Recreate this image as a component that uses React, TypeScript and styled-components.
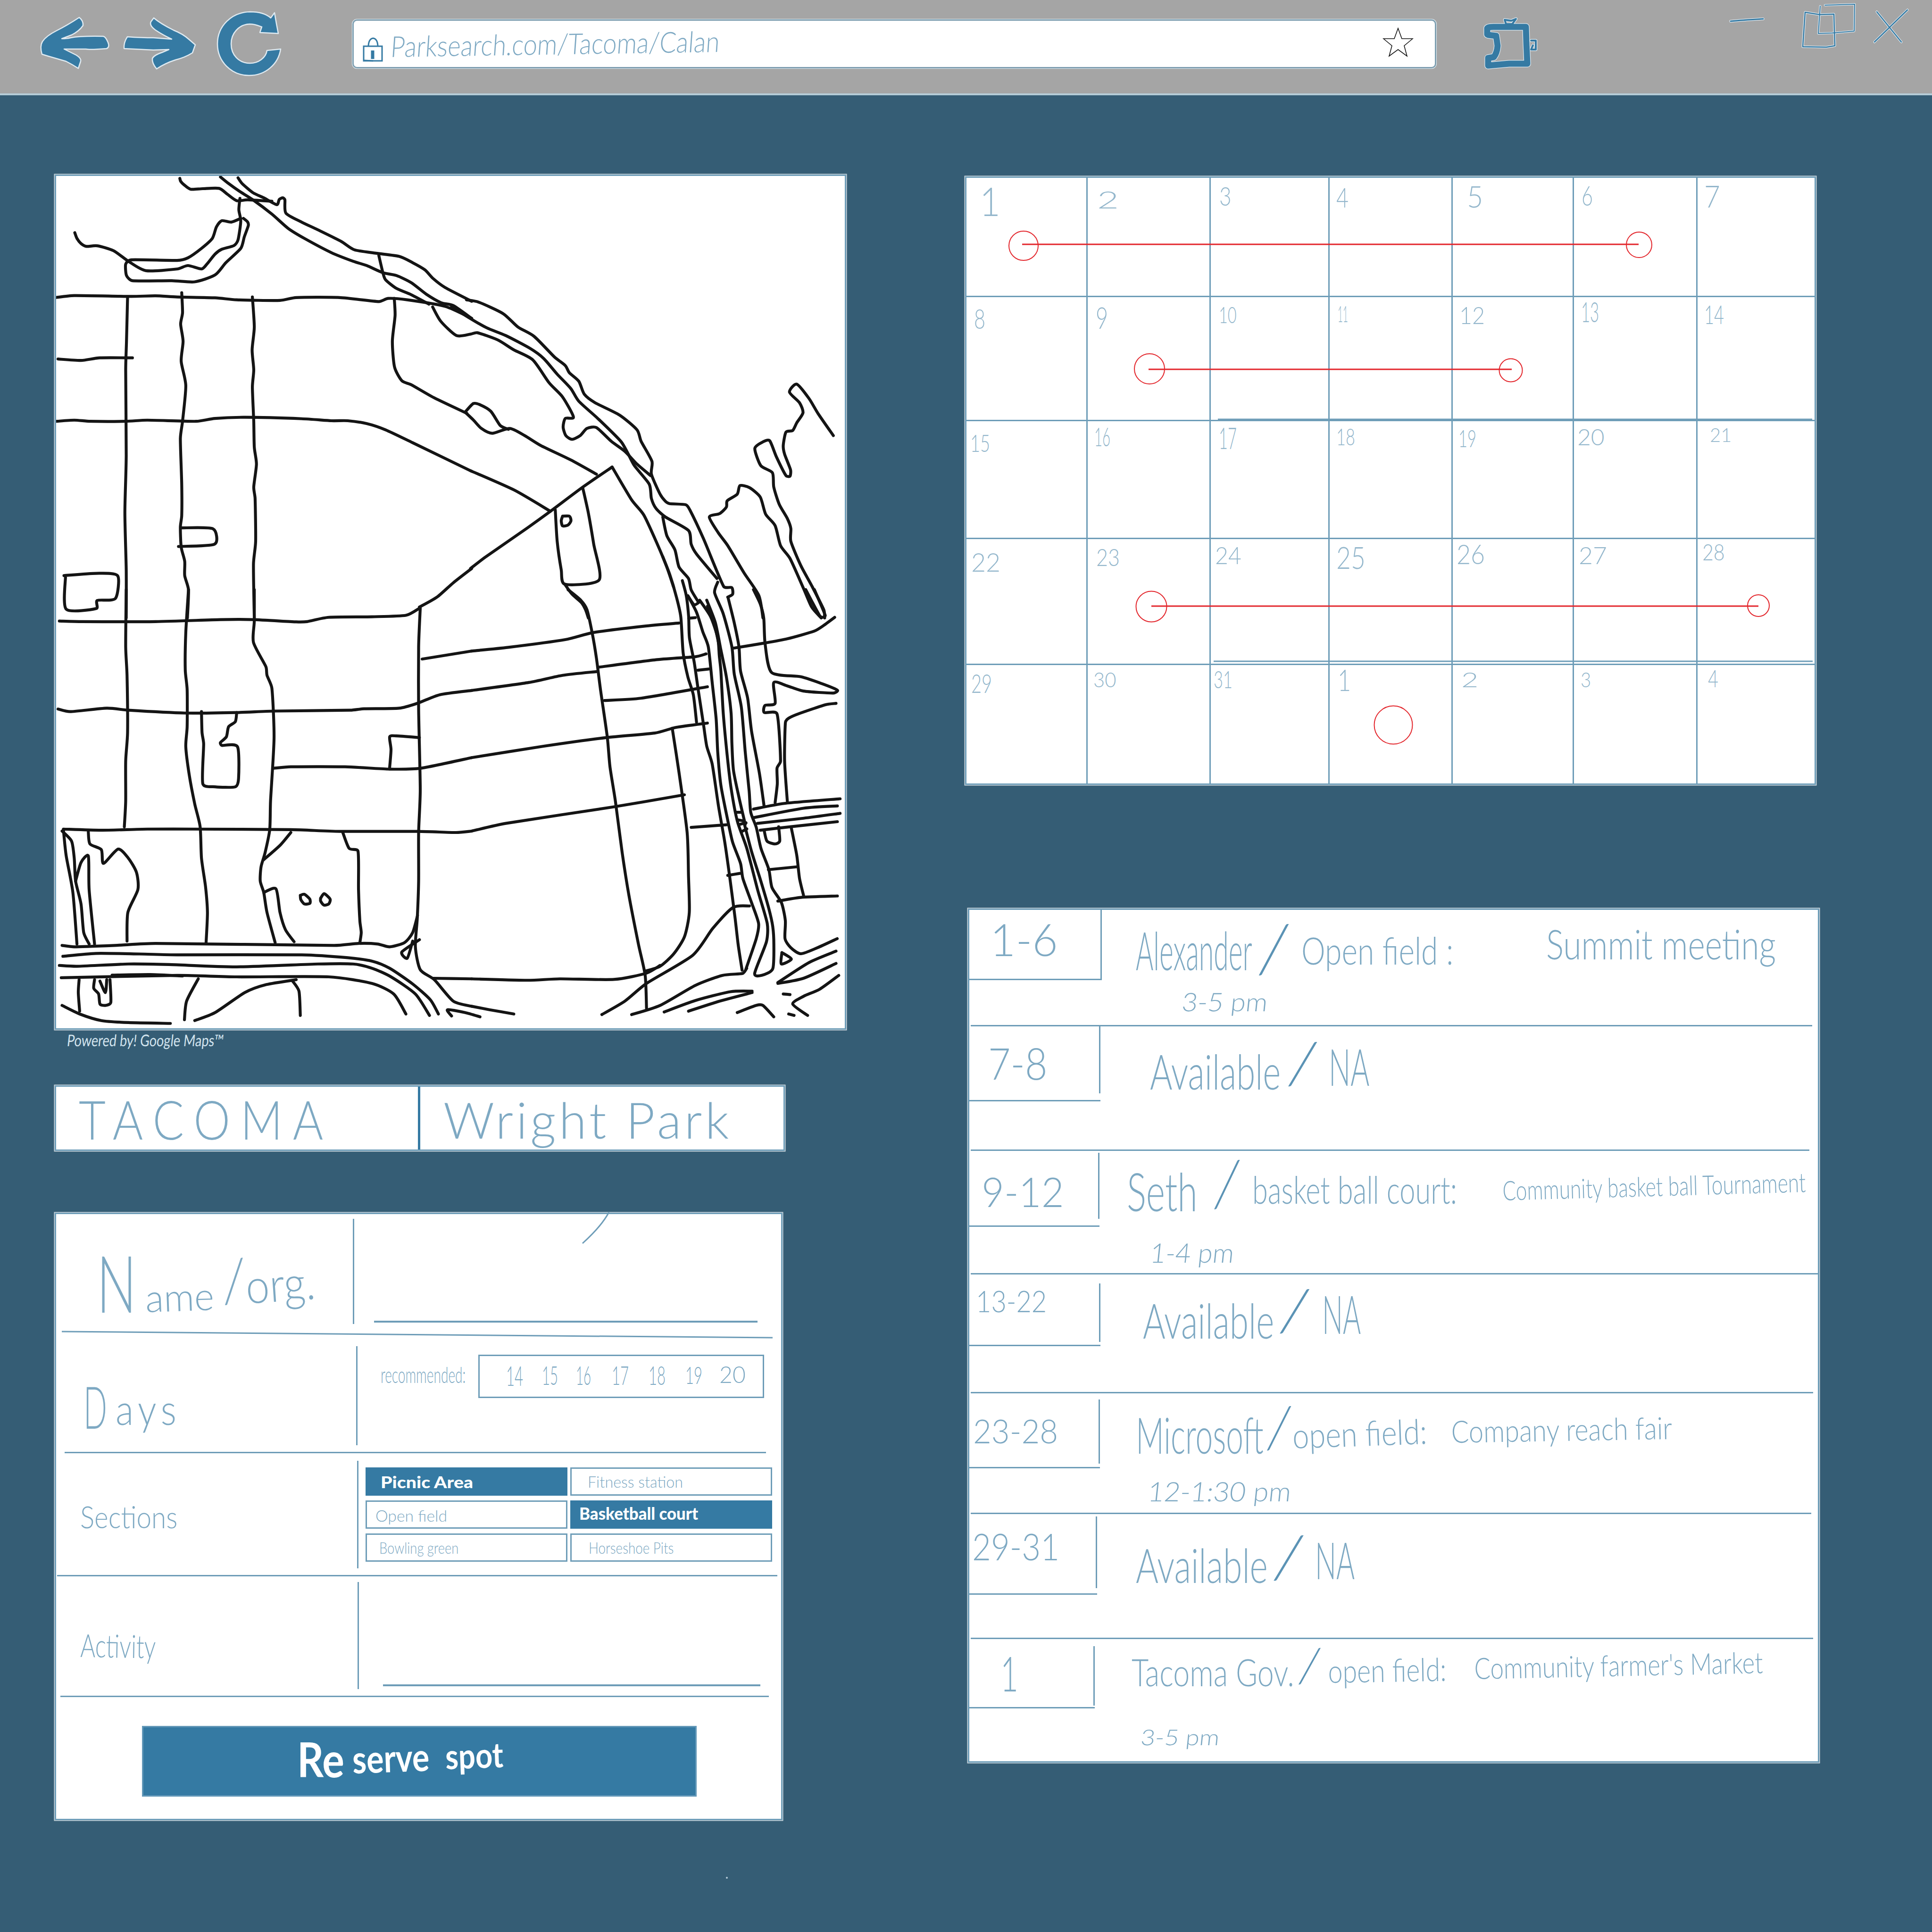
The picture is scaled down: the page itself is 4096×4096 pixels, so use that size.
import React, { ReactNode, useLayoutEffect, useRef, useState } from "react";
import styled, { createGlobalStyle } from "styled-components";

const BG = "#355d75";
const BLUE = "#357aa3";
const LINE = "#6e9db8";
const INK = "#7ea9c3";

const Global = createGlobalStyle`
  * { box-sizing: border-box; }
  html, body { margin: 0; background: ${BG}; }
  body { font-family: Lato, "Open Sans", sans-serif; color: ${INK}; }
`;

/* ---------- pen lettering ---------- */

const InkBox = styled.div<{ $w: number; $h: number; $x: number; $y: number; $tilt: number; $color: string; $weight: number; $spacing: number; $slant: number }>`
  flex: none;
  width: ${(p) => p.$w}px;
  height: ${(p) => p.$h}px;
  line-height: ${(p) => p.$h}px;
  margin: ${(p) => p.$y}px 0 0 ${(p) => p.$x}px;
  font-size: ${(p) => p.$h * 1.36}px;
  font-weight: ${(p) => p.$weight};
  letter-spacing: ${(p) => p.$spacing}em;
  color: ${(p) => p.$color};
  transform: rotate(${(p) => p.$tilt}deg) skewX(${(p) => -p.$slant}deg);
  transform-origin: 0 100%;
`;
const InkSpan = styled.span`
  display: inline-block;
  white-space: nowrap;
  transform-origin: 0 50%;
`;

type InkProps = {
  children: ReactNode;
  w: number;
  h: number;
  x?: number;
  y?: number;
  tilt?: number;
  slant?: number;
  color?: string;
  weight?: number;
  spacing?: number;
};

function Ink({ children, w, h, x = 0, y = 0, tilt = 0, slant = 0, color = INK, weight = 300, spacing = 0 }: InkProps) {
  const ref = useRef<HTMLSpanElement>(null);
  const [k, setK] = useState(1);
  useLayoutEffect(() => {
    if (ref.current && ref.current.offsetWidth) setK(w / ref.current.offsetWidth);
  }, [w, h, children]);
  return (
    <InkBox $w={w} $h={h} $x={x} $y={y} $tilt={tilt} $color={color} $weight={weight} $spacing={spacing} $slant={slant}>
      <InkSpan ref={ref} style={{ transform: `scaleX(${k})` }}>{children}</InkSpan>
    </InkBox>
  );
}

/* ---------- page frame ---------- */

const Page = styled.div`
  width: 4096px;
  height: 4096px;
  background: ${BG};
  overflow: hidden;
`;
const Toolbar = styled.header`
  height: 202px;
  display: flex;
  align-items: flex-start;
  background: #a5a5a5;
  border-bottom: 4px solid #b5ccd8;
`;
const NavIcons = styled.svg`
  display: block;
  flex: none;
  width: 747px;
  height: 198px;
`;
const Address = styled.div`
  flex: none;
  width: 2298px;
  height: 104px;
  margin-top: 41px;
  display: flex;
  background: #fff;
  border: 3px solid #7f9fb1;
  border-radius: 10px;
  box-shadow: 0 0 0 1px #e6eff4;
`;
const LockIcon = styled.svg`
  display: block;
  flex: none;
  width: 44px;
  height: 58px;
  margin: 34px 0 0 19px;
`;
const StarIcon = styled.svg`
  display: block;
  flex: none;
  width: 66px;
  height: 64px;
  margin: 14px 45px 0 auto;
`;
const WindowIcons = styled.svg`
  display: block;
  flex: none;
  width: 1051px;
  height: 198px;
`;
const Main = styled.main`
  display: flex;
  padding: 168px 0 0 116px;
`;
const Left = styled.section`
  width: 1930px;
  flex: none;
`;
const Right = styled.section`
  padding-top: 4px;
`;
const Panel = styled.div`
  background: #fff;
  border: 3px solid ${LINE};
  box-shadow: 0 0 0 1.5px rgba(255, 255, 255, 0.75);
`;
const MapPanel = styled(Panel)`
  width: 1678px;
  height: 1813px;
`;
const MapDrawing = styled.svg`
  display: block;
  width: 1671px;
  height: 1807px;
`;
const Credit = styled.div`
  height: 118px;
  display: flex;
  padding: 9px 0 0 25px;
`;
const PlaceBar = styled(Panel)`
  width: 1548px;
  height: 139px;
  display: flex;
`;
const PlaceCell = styled.div<{ $w: number; $divider?: boolean }>`
  width: ${(p) => p.$w}px;
  display: flex;
  border-right: ${(p) => (p.$divider ? `5px solid ${BLUE}` : "0")};
`;

/* ---------- reservation form ---------- */

const Form = styled(Panel)`
  width: 1543px;
  height: 1288px;
  margin-top: 131px;
`;
const FormRow = styled.div<{ $h: number }>`
  height: ${(p) => p.$h}px;
  display: flex;
`;
const Label = styled.div<{ $w: number }>`
  flex: none;
  width: ${(p) => p.$w}px;
  display: flex;
`;
const Field = styled.div<{ $top: number; $bottom: number }>`
  flex: 1;
  margin: ${(p) => p.$top}px 0 ${(p) => p.$bottom}px;
  border-left: 3px solid ${LINE};
  display: flex;
`;
const Rule = styled.div<{ $l: number; $r: number; $tilt?: number }>`
  height: 3px;
  margin: 0 ${(p) => p.$r}px 0 ${(p) => p.$l}px;
  background: ${LINE};
  transform: rotate(${(p) => p.$tilt ?? 0}deg);
`;
const WriteLine = styled.div<{ $l: number; $w: number; $b: number }>`
  align-self: flex-end;
  width: ${(p) => p.$w}px;
  height: 4px;
  margin: 0 0 ${(p) => p.$b}px ${(p) => p.$l}px;
  background: ${LINE};
`;
const StrayMarks = styled.svg`
  position: absolute;
  left: 1230px;
  top: 2566px;
  width: 330px;
  height: 1430px;
  pointer-events: none;
`;
const DayBox = styled.div`
  width: 606px;
  height: 92px;
  margin: 18px 0 0 27px;
  display: flex;
  border: 3px solid ${LINE};
`;
const Options = styled.div`
  display: grid;
  grid-template-columns: 428px 428px;
  grid-template-rows: 60px 60px 60px;
  gap: 10px 6px;
  margin: 14px 0 0 15px;
`;
const Option = styled.div<{ $on?: boolean }>`
  display: flex;
  border: 3px solid ${(p) => (p.$on ? BLUE : LINE)};
  background: ${(p) => (p.$on ? BLUE : "#fff")};
`;
const Reserve = styled.button`
  display: flex;
  width: 1176px;
  height: 150px;
  margin: 61px 0 0 182px;
  padding: 0;
  font-family: inherit;
  text-align: left;
  background: ${BLUE};
  border: 3px solid #6398b8;
`;

/* ---------- calendar ---------- */

const Calendar = styled(Panel)`
  position: relative;
  width: 1804px;
  height: 1290px;
  display: grid;
  grid-template-columns: 257px 261px 252px 261px 257px 262px 1fr;
  grid-template-rows: 253px 263px 250px 267px 1fr;
`;
const Day = styled.div<{ $right: boolean; $bottom: boolean }>`
  display: flex;
  align-items: flex-start;
  border-right: ${(p) => (p.$right ? `3px solid ${LINE}` : "0")};
  border-bottom: ${(p) => (p.$bottom ? `3px solid ${LINE}` : "0")};
`;
const Spans = styled.svg`
  position: absolute;
  left: -3px;
  top: -3px;
  width: 1804px;
  height: 1290px;
`;

/* ---------- schedule ---------- */

const Schedule = styled(Panel)`
  width: 1805px;
  height: 1811px;
  margin: 262px 0 0 6px;
`;
const Slot = styled.div<{ $h: number }>`
  height: ${(p) => p.$h}px;
  display: flex;
  flex-direction: column;
`;
const SlotBody = styled.div`
  flex: 1;
  min-height: 0;
  display: flex;
  align-items: flex-start;
`;
const DateCell = styled.div<{ $w: number; $h: number }>`
  flex: none;
  width: ${(p) => p.$w}px;
  height: ${(p) => p.$h}px;
  border-bottom: 3px solid ${LINE};
`;
const DateBody = styled.div<{ $top: number; $len: number }>`
  margin-top: ${(p) => p.$top}px;
  height: ${(p) => p.$len}px;
  border-right: 3px solid ${LINE};
  display: flex;
`;
const Details = styled.div`
  flex: 1;
`;
const Entry = styled.div`
  height: 172px;
  display: flex;
  align-items: flex-start;
`;

/* ---------- map strokes, one list per sheet ---------- */

type Sheet = { at: string; scale: string; roads: string[] };
const SHEETS: Sheet[] = [
  {
    at: "100 360",
    scale: "0.574 0.6059",
    roads: [
      "490,30 493,40 505,52 530,68 575,66 635,65 665,85 700,108 740,105 830,110",
      "640,25 670,48 710,75 760,105 830,155 890,205 950,240 1050,290 1130,320 1180,335 1240,360 1290,370 1345,395 1400,435 1455,465 1500,475 1568,520",
      "705,28 720,48 760,80 800,98 848,122 857,104 870,98 878,105 882,152 940,183 1000,210 1085,250 1135,280 1215,292 1300,303 1350,325 1395,350 1425,380 1470,412 1568,460",
      "1225,300 1240,360 1250,385 1290,415 1340,435 1410,470",
      "30,447 100,440 310,443 400,441 480,445 620,448 700,455 860,457 920,447 1080,447 1225,461 1260,450 1330,455 1470,478 1568,520",
      "102,220 110,240 125,258 145,268 185,266 245,283 300,320 365,353 480,347 520,335 570,347 590,330 620,295 645,278 690,265 705,245 715,180 708,140 712,100",
      "715,170 680,183 645,178 625,200 610,240 570,275 520,308 480,317 310,315 290,330 293,370 315,388 460,388 545,392 620,368 660,325 715,275 728,235 743,195 740,182 725,170",
      "297,445 293,600 290,700 292,1000 287,1200 292,1400 292,1568",
      "497,430 500,500 493,540 502,600 495,670 512,755 500,880 492,940 497,1100 497,1210 492,1250 495,1320 508,1370 508,1420 522,1470 518,1568",
      "758,445 765,550 757,630 763,700 758,760 763,880 765,970 773,1030 763,1110 768,1150 770,1300 762,1380 765,1568",
      "40,662 125,667 195,658 315,658",
      "35,880 100,876 160,880 290,880 370,876 550,880 620,870 730,866 940,871 1050,878 1110,878 1180,888 1250,910 1350,955 1568,1055",
      "495,1253 612,1256 618,1310 485,1318",
      "62,1420 180,1412 260,1420 252,1500 185,1507 182,1535 70,1537 68,1420",
      "1282,450 1285,510 1275,600 1283,690 1310,738 1345,752 1430,798 1550,852",
      "1375,1530 1440,1495 1500,1445 1568,1395",
    ],
  },
  {
    at: "900 360",
    scale: "0.574 0.6059",
    roads: [
      "155,455 200,463 290,503 345,550 405,583 480,655 520,685 535,710 570,740 590,785 630,815 720,858 785,910 800,950 840,1020 838,1065 870,1135 890,1160 905,1168 965,1172 980,1190 1030,1290 1105,1458 1135,1462 1138,1485 1120,1495",
      "100,478 160,515 230,553 300,580 390,625 440,660 490,715 540,765 570,810 640,870 725,950 750,990 775,1035 830,1100 838,1150 855,1185 890,1215 975,1262 985,1310 1005,1345 1080,1430",
      "150,848 180,875 210,905 250,922 315,905 370,930 430,965 540,1015 635,1065",
      "150,848 180,818 205,822 245,845 280,895 310,908",
      "30,480 60,530 118,580 170,575 195,570 270,595 330,630 400,665 460,745 510,795 550,865 520,870 512,900 522,930 545,943 575,930 600,905 635,902 690,950 740,985 785,1030 835,1070",
      "170,1053 330,1120 465,1195",
      "170,1395 225,1355 380,1253 465,1195 585,1110 693,1040",
      "693,1040 765,1155 810,1208 860,1310 895,1390 920,1460",
      "483,1190 490,1300 505,1400 518,1450 645,1435 625,1310 605,1200 585,1115",
      "510,1212 535,1212 541,1228 530,1243 510,1246 505,1228 510,1212",
      "518,1450 545,1485 580,1515 595,1540 605,1568",
      "880,1215 895,1280 925,1330 940,1390 975,1430 985,1470 1010,1510",
      "1510,930 1455,855 1420,800 1375,750 1348,778 1385,815 1398,850 1375,885 1360,912 1335,918 1325,965 1330,995 1352,1050 1350,1072 1335,1070 1300,1005 1275,948 1250,952 1220,975 1242,1035 1285,1060 1290,1110 1310,1170 1340,1220 1353,1255 1353,1300 1390,1385 1430,1455 1475,1540 1478,1568",
      "1250,1568 1235,1490 1180,1410 1120,1315 1085,1270 1052,1215 1090,1203 1115,1180 1118,1158 1155,1135 1165,1105 1200,1112 1240,1145 1260,1205 1295,1245 1315,1315 1350,1360 1400,1465 1430,1530 1465,1568",
    ],
  },
  {
    at: "100 1250",
    scale: "0.574 0.6059",
    roads: [
      "45,110 130,112 400,112 640,105 760,105 920,113 960,112 1040,97 1200,95 1325,90 1375,65",
      "292,0 290,200 295,300 297,500 290,600 290,740 285,830",
      "522,0 512,150 510,280 517,350 517,480 512,550 525,650 545,750 565,830 570,940 585,1040 592,1130 587,1235",
      "765,0 765,110 762,185 808,270 812,300 830,345 838,520 825,740 822,840 805,920 790,970 787,1020 800,1060 812,1130 842,1235",
      "1568,353 1450,368 1370,397 1300,415 1170,417 1120,422 840,425 700,430 510,432 300,422 220,415 85,427 40,418",
      "838,625 900,620 1100,620 1260,628 1380,625 1568,588",
      "1568,845 1510,850 1370,846 1080,846 900,840 540,838 370,838 200,842 60,838",
      "1385,243 1568,215",
      "1378,65 1372,200 1372,420 1378,700 1372,850 1372,1020 1367,1150 1360,1250 1378,1330 1430,1365 1500,1440 1568,1458",
      "570,427 572,500 578,540 575,680 620,690 695,690 707,660 703,550 645,545 640,535 662,515 670,480 695,462 700,430",
      "1265,622 1270,560 1265,515 1290,512 1375,518",
      "60,840 70,930 95,1060 110,1240",
      "55,845 90,880 100,940 105,1020 125,1100 135,1200 155,1240",
      "105,1020 125,955 152,932 155,1050 175,1240",
      "152,848 158,890 200,910 208,958 262,908 300,940 330,990 335,1050 298,1130 295,1230",
      "900,850 860,895 800,945",
      "800,1060 845,1047 860,1130 880,1190 912,1232",
      "935,1070 950,1066 970,1083 970,1098 950,1100 937,1085 935,1070",
      "1010,1080 1023,1064 1045,1083 1040,1100 1022,1104 1010,1090 1010,1080",
      "1092,850 1115,905 1148,915 1150,1050 1155,1160 1160,1200 1155,1235",
      "55,1245 100,1250 250,1245 400,1238 1060,1245 1150,1238 1220,1240 1265,1250 1320,1235 1350,1200 1368,1140",
      "58,1283 180,1273 340,1275 480,1278 940,1278 1110,1288 1200,1300 1265,1325 1350,1380 1415,1435 1445,1485",
      "45,1315 110,1318 300,1310 450,1312 700,1320 1000,1310 1130,1310 1200,1325 1270,1355 1360,1415 1412,1490",
      "52,1358 480,1350 700,1355 1040,1355 1200,1378 1280,1415 1325,1485",
      "240,1349 380,1347 500,1352",
      "118,1365 115,1410 120,1475",
      "175,1365 172,1395 190,1415 195,1450 215,1455 235,1445 232,1365",
      "195,1370 215,1410 220,1365",
      "55,1455 120,1485 200,1508 300,1515 455,1518",
      "558,1362 515,1440 507,1505",
      "545,1508 620,1480 730,1410 810,1382 920,1365",
      "905,1368 930,1405 935,1490",
      "1375,1225 1310,1268 1330,1290 1350,1230",
      "1425,1360 1568,1362",
    ],
  },
  {
    at: "900 1250",
    scale: "0.574 0.6059",
    roads: [
      "530,0 575,35 600,70 620,155 635,240 650,350 675,515 685,620 705,740 730,920 755,1070 790,1240 815,1350 820,1465",
      "1408,0 1430,40 1460,92 1470,97 1480,90 1440,0",
      "1215,0 1240,50 1253,100 1258,190 1282,290 1390,305 1470,330 1525,352 1510,362 1400,355 1340,337 1290,325 1295,398 1258,405 1255,430 1302,435 1315,600 1302,625 1303,680 1295,745",
      "1520,398 1480,403 1380,435 1345,450 1333,465 1330,600 1340,740",
      "1140,205 1250,188 1340,172 1440,145 1475,125 1515,97",
      "1215,768 1330,748 1535,732",
      "1215,798 1400,765 1525,757",
      "1230,818 1400,800 1535,783",
      "1240,842 1350,830 1525,812",
      "1255,845 1265,880 1295,890 1312,880 1308,830",
      "1355,835 1375,930 1385,1010 1400,1070",
      "1270,980 1375,970",
      "1305,1090 1390,1077 1525,1072",
      "174,215 310,202 520,175 625,150 810,128 940,117",
      "174,353 385,325 510,300 635,287",
      "640,272 860,245 1000,235 1040,225",
      "665,388 800,380 1045,340",
      "1010,282 1050,278",
      "174,588 440,548 670,518 850,502 930,482 1045,467",
      "174,845 300,818 700,760 960,718",
      "915,485 940,640 970,850 975,1000 978,1130 960,1215 920,1275 870,1318 815,1335",
      "655,1487 740,1440 820,1378 990,1280 1065,1185 1140,1112 1200,1107",
      "174,1362 380,1367 500,1362 700,1364 820,1342 870,1315",
      "174,1458 240,1470 330,1485",
      "985,832 1115,823",
      "1120,1000 1165,993",
      "765,1487 870,1455 1000,1385 1100,1350 1175,1343 1190,1325",
      "885,1478 1000,1438 1130,1407 1210,1405",
      "975,1475 1090,1440 1210,1410",
      "1155,1480 1225,1455 1250,1455 1290,1495",
      "1320,1270 1318,1310 1355,1293 1320,1270",
      "1305,1375 1420,1305 1520,1265",
      "1305,1378 1400,1360 1520,1308",
      "1415,1490 1360,1450 1400,1423 1460,1398 1530,1350",
      "1325,1415 1350,1417",
      "1345,1485 1365,1490",
      "100,1492 85,1470 150,1480 205,1495",
    ],
  },
  {
    at: "1400 1180",
    scale: "0.3333 0.6378",
    roads: [
      "15,0 60,60 100,130 130,200 145,320 175,400 210,460 230,550",
      "140,80 165,130 180,200 185,270 215,350 240,440 275,560 295,630 330,690 370,830 410,950 440,1060 475,1200 495,1290 520,1375",
      "180,205 222,203",
      "175,130 230,185 270,250 305,300 330,420 355,540 365,650 385,760 430,880 460,950 510,1020 525,1070 580,1150 625,1220 610,1270 545,1370",
      "175,130 215,160 250,150",
      "250,145 320,200 365,270 375,330 385,380 400,520 425,660 450,770 490,880 550,970 620,1110 680,1220 675,1280 600,1385 645,1392 715,1370 722,1290 715,1230 690,1170 640,1080 580,980 535,890",
      "295,145 350,220 385,310 420,400 450,520 455,620 465,710 500,800 540,890",
      "300,165 350,240 375,300",
      "480,850 515,850",
      "490,875 525,878",
      "505,890 545,885",
      "515,915 550,905",
      "365,85 345,120 400,190 455,300 470,390 515,500 540,650 565,780 575,850 610,900 640,970 690,1040 710,1100 770,1150 795,1210 793,1270 830,1300 895,1320 1000,1300 1125,1270",
      "430,135 470,220 500,300 510,380 555,470 580,580 630,720 660,830",
    ],
  },
];

/* bends each run of points softly, the way a marker turns */
function penPath(points: string) {
  const p = points.split(" ").map((s) => s.split(",").map(Number));
  const t = 0.12;
  let d = `M${p[0][0]} ${p[0][1]}`;
  for (let i = 0; i < p.length - 1; i++) {
    const a = p[Math.max(i - 1, 0)];
    const b = p[i];
    const c = p[i + 1];
    const e = p[Math.min(i + 2, p.length - 1)];
    const len = Math.hypot(c[0] - b[0], c[1] - b[1]);
    const ka = Math.min(t, (0.3 * len) / (Math.hypot(c[0] - a[0], c[1] - a[1]) || 1));
    const ke = Math.min(t, (0.3 * len) / (Math.hypot(e[0] - b[0], e[1] - b[1]) || 1));
    d += `C${b[0] + (c[0] - a[0]) * ka} ${b[1] + (c[1] - a[1]) * ka} ${c[0] - (e[0] - b[0]) * ke} ${c[1] - (e[1] - b[1]) * ke} ${c[0]} ${c[1]}`;
  }
  return d;
}

/* number, left, top, width, height inside its day cell */
type DayNumber = [string, number, number, number, number];
const DAYS: DayNumber[] = [
  ["1", 28, 18, 44, 62], ["2", 20, 26, 46, 38], ["3", 18, 18, 26, 40], ["4", 14, 20, 26, 42], ["5", 30, 16, 34, 46], ["6", 16, 16, 24, 42], ["7", 14, 14, 34, 48],
  ["8", 16, 24, 24, 42], ["9", 17, 20, 26, 46], ["10", 17, 20, 38, 34], ["11", 17, 18, 22, 34], ["12", 14, 18, 54, 38], ["13", 15, 8, 38, 44], ["14", 14, 16, 42, 40],
  ["15", 8, 26, 42, 38], ["16", 14, 12, 34, 40], ["17", 17, 12, 38, 46], ["18", 14, 14, 40, 36], ["19", 12, 16, 38, 38], ["20", 7, 16, 58, 34], ["21", 26, 14, 46, 30],
  ["22", 10, 28, 62, 40], ["23", 18, 18, 50, 38], ["24", 9, 14, 56, 38], ["25", 14, 14, 62, 48], ["26", 8, 10, 60, 42], ["27", 10, 14, 60, 38], ["28", 10, 10, 48, 34],
  ["29", 10, 18, 44, 40], ["30", 12, 14, 48, 32], ["31", 6, 10, 40, 38], ["1", 17, 8, 28, 46], ["2", 18, 14, 36, 32], ["3", 14, 14, 22, 32], ["4", 22, 8, 22, 38],
];

type Word = [string, number, number, number, number, number?];
type SlotData = {
  h: number;
  end: number;
  date: { text: string; w: number; h: number; top: number; len: number; x: number; y: number; tw: number; th: number };
  words: Word[];
  note?: Word;
};

/* word: text, gap before, top, width, cap height, tilt */
const SLOTS: SlotData[] = [
  {
    h: 247, end: 12,
    date: { text: "1-6", w: 281, h: 149, top: 0, len: 146, x: 44, y: 26, tw: 144, th: 70 },
    words: [["Alexander", 72, 44, 247, 82], ["/", 10, 26, 58, 104], ["Open field :", 36, 54, 322, 60], ["Summit meeting", 197, 40, 487, 64]],
    note: ["3-5 pm", 168, 2, 182, 40],
  },
  {
    h: 264, end: 18,
    date: { text: "7-8", w: 278, h: 159, top: 0, len: 142, x: 40, y: 44, tw: 125, th: 68 },
    words: [["Available", 105, 56, 277, 76], ["/", 12, 30, 58, 90], ["NA", 32, 44, 86, 80]],
  },
  {
    h: 262, end: 0,
    date: { text: "9-12", w: 276, h: 161, top: 4, len: 140, x: 26, y: 50, tw: 175, th: 64 },
    words: [["Seth", 58, 44, 150, 82], ["/", 32, 16, 48, 100], ["basket ball court:", 36, 50, 434, 60], ["Community basket ball Tournament", 97, 62, 643, 42, -1.6]],
    note: ["1-4 pm", 106, 22, 177, 42],
  },
  {
    h: 252, end: 10,
    date: { text: "13-22", w: 278, h: 152, top: 19, len: 124, x: 14, y: 14, tw: 150, th: 46 },
    words: [["Available", 90, 58, 278, 76], ["/", 8, 28, 60, 90], ["NA", 34, 42, 82, 82]],
  },
  {
    h: 256, end: 14,
    date: { text: "23-28", w: 277, h: 159, top: 13, len: 136, x: 8, y: 40, tw: 180, th: 52 },
    words: [["Microsoft", 76, 48, 271, 78], ["/", 4, 24, 46, 90], ["open field:", 12, 62, 285, 54, -2], ["Company reach fair", 51, 56, 468, 48, -1]],
    note: ["12-1:30 pm", 100, 14, 303, 42],
  },
  {
    h: 265, end: 10,
    date: { text: "29-31", w: 271, h: 171, top: 5, len: 152, x: 6, y: 34, tw: 185, th: 58 },
    words: [["Available", 82, 70, 280, 74], ["/", 8, 42, 60, 92], ["NA", 32, 56, 84, 80]],
  },
  {
    h: 260, end: 0,
    date: { text: "1", w: 266, h: 147, top: 15, len: 126, x: 66, y: 18, tw: 38, th: 76 },
    words: [["Tacoma Gov.", 78, 38, 345, 60], ["/", 6, 16, 44, 74], ["open field:", 22, 42, 251, 50, -1], ["Community farmer's Market", 59, 38, 612, 46, -1.2]],
    note: ["3-5 pm", 96, 18, 167, 34],
  },
];

const RED = "#e3262c";

export default function App() {
  return (
    <>
      <Global />
      <Page>
        <Toolbar>
          <NavIcons viewBox="0 0 747 198" fill={BLUE} stroke="#dfeaf1" strokeWidth="2.5" strokeLinejoin="round">
            <path d="M168 37Q177 44 176 54Q168 66 152 74L131 82Q142 82 150 80Q170 76 219 77Q224 78 229 90Q233 100 226 103Q190 106 182 104L136 104Q152 112 162 117Q173 124 171 130L166 145Q154 137 140 130L102 119L89 115Q84 98 90 88Q98 76 120 65Q142 54 168 37Z" />
            <path d="M326 38Q340 50 368 64Q388 72 400 83L414 95L408 112Q392 122 372 127Q350 134 332 146Q322 134 323 124Q326 117 344 111L358 105L325 106L263 103Q262 90 270 78Q300 80 325 80L364 83Q345 74 330 64Q316 54 320 46Z" />
            <path d="M595 104C590 137 562 160 528 160C490 160 461 130 461 93C461 55 491 26 530 25C550 25 565 30 574 38L582 27L586 50L590 71L551 69L555 57C547 54 540 51 529 51C506 52 490 71 490 93C490 116 506 134 530 134C548 134 564 122 566 107Z" />
          </NavIcons>
          <Address>
            <LockIcon viewBox="0 0 44 58" fill="none" stroke={BLUE} strokeWidth="3">
              <path d="M2 20H41V51H2Z" />
              <path d="M12 19Q13 4 22 3Q31 4 32 19M3 50L22 51" />
              <path d="M21 29V47" strokeWidth="7" />
            </LockIcon>
            <Ink w={697} h={45} x={14} y={31} tilt={-0.9} slant={5}>Parksearch.com/Tacoma/Calan</Ink>
            <StarIcon viewBox="2931 58 66 64" fill="none" stroke="#111" strokeWidth="1.6">
              <path d="M2964 60L2972 82H2995L2977 97L2983 119L2964 105L2945 119L2951 97L2933 82H2956Z" />
            </StarIcon>
          </Address>
          <WindowIcons viewBox="3045 0 1051 198" fill="none" strokeLinejoin="round" strokeLinecap="round">
            {[{ c: "#dfeaf1", e: 2.5 }, { c: BLUE, e: 0 }].map(({ c, e }) => (
              <g key={c} stroke={c}>
                <path d="M3153 73V60Q3154 57 3166 57H3235L3236 90L3238 135L3200 135L3155 139V123L3167 121Q3174 112 3175 97L3172 76L3155 74" strokeWidth={13 + e} />
                <path d="M3190 42L3193 51H3206L3214 40L3204 44Z" strokeWidth={4 + e} />
                <path d="M3246 86H3256V105H3246L3250 96" strokeWidth={4 + e} />
                <path d="M3669 45Q3690 43 3738 40" strokeWidth={3 + e} />
                <path d="M3869 11L3932 9L3931 66L3884 70L3855 71L3859 13" strokeWidth={2 + e} />
                <path d="M3827 26L3858 31L3888 30L3890 97L3872 100L3822 99Z" strokeWidth={2.5 + e} />
                <path d="M3979 25L4031 89M4044 21L3974 89" strokeWidth={2.5 + e} />
              </g>
            ))}
          </WindowIcons>
        </Toolbar>

        <Main>
          <Left>
            <MapPanel>
              <MapDrawing viewBox="119 373 1671 1807" fill="none" stroke="#141414" strokeLinecap="round" strokeLinejoin="round">
                {SHEETS.map(({ at, scale, roads }) => (
                  <g key={at} transform={`translate(${at}) scale(${scale})`}>
                    {roads.map((r) => (
                      <path key={r} d={penPath(r)} strokeWidth="6.2" vectorEffect="non-scaling-stroke" />
                    ))}
                  </g>
                ))}
              </MapDrawing>
            </MapPanel>
            <Credit>
              <Ink w={332} h={25} color="#d3e4ee" weight={400} slant={6}>Powered by! Google Maps™</Ink>
            </Credit>
            <PlaceBar>
              <PlaceCell $w={772} $divider>
                <Ink w={540} h={84} x={48} y={26} spacing={0.22}>TACOMA</Ink>
              </PlaceCell>
              <PlaceCell $w={770}>
                <Ink w={612} h={78} x={49} y={30} spacing={0.06}>Wright Park</Ink>
              </PlaceCell>
            </PlaceBar>

            <Form>
              <FormRow $h={254}>
                <Label $w={629}>
                  <Ink w={84} h={124} x={86} y={82}>N</Ink>
                  <Ink w={146} h={60} x={20} y={146} tilt={-2}>ame</Ink>
                  <Ink w={46} h={96} x={18} y={90}>/</Ink>
                  <Ink w={148} h={74} x={4} y={114} tilt={-4}>org.</Ink>
                </Label>
                <Field $top={10} $bottom={21}>
                  <WriteLine $l={42} $w={813} $b={3} />
                </Field>
              </FormRow>
              <Rule $l={12} $r={18} $tilt={0.5} />
              <FormRow $h={247}>
                <Label $w={636}>
                  <Ink w={50} h={92} x={58} y={104}>D</Ink>
                  <Ink w={138} h={66} x={18} y={122} spacing={0.12}>ays</Ink>
                </Label>
                <Field $top={23} $bottom={14}>
                  <Ink w={180} h={34} x={49} y={43}>recommended:</Ink>
                  <DayBox>
                    <Ink w={36} h={42} x={56} y={20}>14</Ink>
                    <Ink w={34} h={40} x={40} y={20}>15</Ink>
                    <Ink w={32} h={40} x={38} y={20}>16</Ink>
                    <Ink w={36} h={40} x={44} y={20}>17</Ink>
                    <Ink w={36} h={40} x={42} y={20}>18</Ink>
                    <Ink w={36} h={38} x={42} y={20}>19</Ink>
                    <Ink w={56} h={36} x={36} y={20}>20</Ink>
                  </DayBox>
                </Field>
              </FormRow>
              <Rule $l={18} $r={32} />
              <FormRow $h={258}>
                <Label $w={638}>
                  <Ink w={206} h={48} x={51} y={110}>Sections</Ink>
                </Label>
                <Field $top={16} $bottom={14}>
                  <Options>
                    <Option $on><Ink w={196} h={25} x={29} y={15} color="#fff" weight={900}>Picnic Area</Ink></Option>
                    <Option><Ink w={202} h={24} x={34} y={16}>Fitness station</Ink></Option>
                    <Option><Ink w={152} h={24} x={18} y={18}>Open field</Ink></Option>
                    <Option $on><Ink w={252} h={26} x={16} y={12} color="#fff" weight={900}>Basketball court</Ink></Option>
                    <Option><Ink w={168} h={24} x={26} y={16}>Bowling green</Ink></Option>
                    <Option><Ink w={180} h={24} x={36} y={16}>Horseshoe Pits</Ink></Option>
                  </Options>
                </Field>
              </FormRow>
              <Rule $l={2} $r={8} />
              <FormRow $h={253}>
                <Label $w={639}>
                  <Ink w={160} h={50} x={51} y={120} tilt={1}>Activity</Ink>
                </Label>
                <Field $top={12} $bottom={14}>
                  <WriteLine $l={51} $w={800} $b={6} />
                </Field>
              </FormRow>
              <Rule $l={9} $r={26} />
              <Reserve>
                <Ink w={100} h={74} x={326} y={30} color="#fff" weight={700}>Re</Ink>
                <Ink w={163} h={60} x={18} y={36} color="#fff" weight={700} tilt={-2}>serve</Ink>
                <Ink w={123} h={54} x={34} y={34} color="#fff" weight={700} tilt={-2}>spot</Ink>
              </Reserve>
            </Form>
            <StrayMarks viewBox="0 0 330 1430" fill="none" stroke={LINE} strokeWidth="3">
              <path d="M61 4Q45 34 5 70" />
              <circle cx="311" cy="1415" r="1" stroke="#b5ccd8" strokeWidth="2" />
            </StrayMarks>
          </Left>

          <Right>
            <Calendar>
              {DAYS.map(([n, x, y, w, h], i) => (
                <Day key={i} $right={i % 7 !== 6} $bottom={i < 28}>
                  <Ink w={w} h={h} x={x} y={y} color="#94b7cc">{n}</Ink>
                </Day>
              ))}
              <Spans viewBox="2046 374 1804 1290" fill="none" stroke={RED}>
                <path d="M2582 889H3842M2573 1402H3843" stroke={LINE} strokeWidth="3" />
                <path d="M2167 518H3474M2435 783H3205M2441 1285H3728" strokeWidth="3" />
                <g strokeWidth="2">
                  <circle cx="2170" cy="521" r="31" />
                  <circle cx="3475" cy="519" r="27" />
                  <circle cx="2437" cy="782" r="32" />
                  <circle cx="3203" cy="785" r="24.5" />
                  <circle cx="2441" cy="1286" r="32.5" />
                  <circle cx="3728" cy="1284" r="23" />
                  <circle cx="2954" cy="1537" r="40.5" />
                </g>
              </Spans>
            </Calendar>

            <Schedule>
              {SLOTS.map(({ h, end, date, words, note }, i) => (
                <Slot key={i} $h={h}>
                  <SlotBody>
                    <DateCell $w={date.w} $h={date.h}>
                      <DateBody $top={date.top} $len={date.len}>
                        <Ink w={date.tw} h={date.th} x={date.x} y={date.y}>{date.text}</Ink>
                      </DateBody>
                    </DateCell>
                    <Details>
                      <Entry>
                        {words.map(([t, x, y, w, wh, tilt], k) => (
                          <Ink key={k} w={w} h={wh} x={x} y={y} tilt={tilt} slant={t === "/" ? 8 : 0} color={t === "/" ? "#5b93b5" : INK}>{t}</Ink>
                        ))}
                      </Entry>
                      {note && <Ink x={note[1]} y={note[2]} w={note[3]} h={note[4]} slant={6}>{note[0]}</Ink>}
                    </Details>
                  </SlotBody>
                  {i < SLOTS.length - 1 && <Rule $l={3} $r={end} />}
                </Slot>
              ))}
            </Schedule>
          </Right>
        </Main>
      </Page>
    </>
  );
}
